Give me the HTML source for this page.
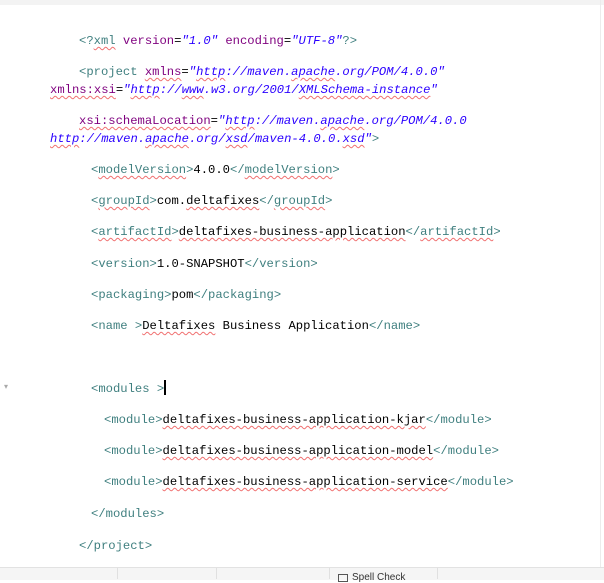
<!DOCTYPE html>
<html><head><meta charset="utf-8"><style>
html,body{margin:0;padding:0;width:604px;height:579px;overflow:hidden;background:#fff;}
.l{position:absolute;white-space:pre;font-family:"Liberation Mono",monospace;font-size:12.2px;line-height:16px;color:#000;}
.t{color:#3f7f7f}.a{color:#7f007f}.v{color:#2a00ff;font-style:italic}
.u{text-decoration:underline wavy #f07070;text-decoration-thickness:1px;text-underline-offset:2px;}
#top{position:absolute;left:0;top:0;width:604px;height:5px;background:#f3f3f3;}
#bar{position:absolute;left:0;top:567px;width:604px;height:12px;background:#f5f5f5;border-top:1px solid #e2e2e2;}
.sep{position:absolute;top:568px;width:1px;height:11px;background:#e0e0e0;}
</style></head><body>
<div id="top"></div>
<div style="position:absolute;left:600px;top:0;width:1px;height:567px;background:#ececec"></div>
<div class="l" style="left:79px;top:33px"><span class="t">&lt;?<span class="u">xml</span> </span><span class="a">version</span>=<span class="v">"1.0"</span> <span class="a">encoding</span>=<span class="v">"UTF-8"</span><span class="t">?&gt;</span></div>
<div class="l" style="left:79px;top:64px"><span class="t">&lt;project </span><span class="a u">xmlns</span>=<span class="v">"<span class="u">http</span>://maven.<span class="u">apache</span>.org/POM/4.0.0"</span></div>
<div class="l" style="left:50px;top:82px"><span class="a u">xmlns:xsi</span>=<span class="v">"<span class="u">http</span>://<span class="u">www</span>.w3.org/2001/<span class="u">XMLSchema-instance</span>"</span></div>
<div class="l" style="left:79px;top:113px"><span class="a u">xsi:schemaLocation</span>=<span class="v">"<span class="u">http</span>://maven.<span class="u">apache</span>.org/POM/4.0.0</span></div>
<div class="l" style="left:50px;top:131px"><span class="v"><span class="u">http</span>://maven.<span class="u">apache</span>.org/<span class="u">xsd</span>/maven-4.0.0.<span class="u">xsd</span>"</span><span class="t">&gt;</span></div>
<div class="l" style="left:91px;top:162px"><span class="t">&lt;<span class="u">modelVersion</span>&gt;</span>4.0.0<span class="t">&lt;/<span class="u">modelVersion</span>&gt;</span></div>
<div class="l" style="left:91px;top:193px"><span class="t">&lt;<span class="u">groupId</span>&gt;</span>com.<span class="u">deltafixes</span><span class="t">&lt;/<span class="u">groupId</span>&gt;</span></div>
<div class="l" style="left:91px;top:224px"><span class="t">&lt;<span class="u">artifactId</span>&gt;</span><span class="u">deltafixes-business-application</span><span class="t">&lt;/<span class="u">artifactId</span>&gt;</span></div>
<div class="l" style="left:91px;top:256px"><span class="t">&lt;version&gt;</span>1.0-SNAPSHOT<span class="t">&lt;/version&gt;</span></div>
<div class="l" style="left:91px;top:287px"><span class="t">&lt;packaging&gt;</span>pom<span class="t">&lt;/packaging&gt;</span></div>
<div class="l" style="left:91px;top:318px"><span class="t">&lt;name &gt;</span><span class="u">Deltafixes</span> Business Application<span class="t">&lt;/name&gt;</span></div>
<div class="l" style="left:4px;top:380px;color:#aaa;font-size:8px">▾</div>
<div class="l" style="left:91px;top:380px"><span class="t">&lt;modules &gt;</span><span style="display:inline-block;width:2px;height:15px;background:#000;vertical-align:-3px"></span></div>
<div class="l" style="left:104px;top:412px"><span class="t">&lt;module&gt;</span><span class="u">deltafixes-business-application-kjar</span><span class="t">&lt;/module&gt;</span></div>
<div class="l" style="left:104px;top:443px"><span class="t">&lt;module&gt;</span><span class="u">deltafixes-business-application-model</span><span class="t">&lt;/module&gt;</span></div>
<div class="l" style="left:104px;top:474px"><span class="t">&lt;module&gt;</span><span class="u">deltafixes-business-application-service</span><span class="t">&lt;/module&gt;</span></div>
<div class="l" style="left:91px;top:506px"><span class="t">&lt;/modules&gt;</span></div>
<div class="l" style="left:79px;top:538px"><span class="t">&lt;/project&gt;</span></div>
<div id="bar"></div>
<div class="sep" style="left:117px"></div>
<div class="sep" style="left:216px"></div>
<div class="sep" style="left:329px"></div>
<div class="sep" style="left:437px"></div>
<div style="position:absolute;left:338px;top:574px;width:8px;height:6px;border:1px solid #555"></div>
<div style="position:absolute;left:352px;top:572px;font:10px 'Liberation Sans',sans-serif;color:#333">Spell Check</div>
</body></html>
